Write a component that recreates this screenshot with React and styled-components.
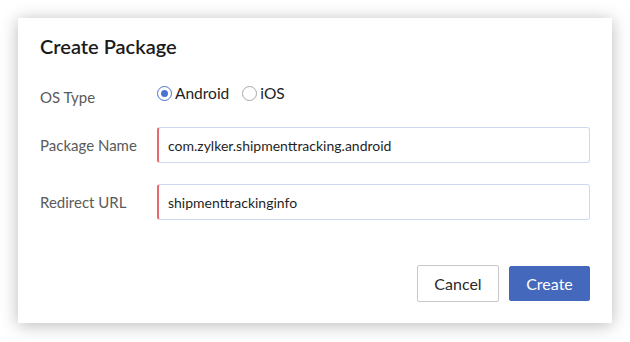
import React from "react";
import styled, { createGlobalStyle } from "styled-components";

const Global = createGlobalStyle`
  html, body { margin: 0; padding: 0; background: #ffffff; }
  body { font-family: Lato, "Open Sans", sans-serif; }
  * { box-sizing: border-box; }
`;

const Page = styled.div`
  padding: 18px;
  width: 630px;
  height: 342px;
`;

const Card = styled.div`
  width: 594px;
  height: 305px;
  background: #ffffff;
  box-shadow: 0 2px 16px rgba(0, 0, 0, 0.28);
  padding: 16px 22px 21px 22px;
  display: flex;
  flex-direction: column;
`;

const Title = styled.h2`
  margin: 0;
  font-size: 20px;
  line-height: 24px;
  font-weight: 600;
  color: #1b1b1b;
`;

const Row = styled.div`
  display: flex;
  align-items: flex-start;
  margin-top: ${(p) => p.$gap}px;
`;

const Label = styled.div`
  width: 117px;
  flex: none;
  font-size: 15px;
  line-height: 36px;
  color: #5a5a5a;
`;

const RadioGroup = styled.div`
  display: flex;
  align-items: center;
  gap: 13px;
  margin-top: 4px;
`;

const RadioItem = styled.label`
  display: flex;
  align-items: center;
  gap: 3px;
  font-size: 15.5px;
  line-height: 20px;
  color: #222;
`;

const RadioCircle = styled.span`
  width: 15px;
  height: 15px;
  border-radius: 50%;
  border: 1px solid ${(p) => (p.$checked ? "#4a72d4" : "#a8a8a8")};
  display: flex;
  align-items: center;
  justify-content: center;
  background: #fff;
  &::after {
    content: "";
    width: 7px;
    height: 7px;
    border-radius: 50%;
    background: ${(p) => (p.$checked ? "#4a72d4" : "transparent")};
  }
`;

const Input = styled.div`
  flex: 1;
  height: 36px;
  border: 1px solid #cfd8ee;
  border-left: 2px solid #e66a6c;
  border-radius: 3px;
  padding-left: 9px;
  display: flex;
  align-items: center;
  font-size: 14px;
  color: #1f1f1f;
`;

const Footer = styled.div`
  margin-top: auto;
  display: flex;
  justify-content: flex-end;
  align-items: center;
  gap: 10px;
`;

const Button = styled.button`
  font-family: Lato, "Open Sans", sans-serif;
  font-size: 16px;
  height: ${(p) => (p.$primary ? 35 : 37)}px;
  width: ${(p) => (p.$primary ? 81 : 82)}px;
  border-radius: 2px;
  border: 1px solid ${(p) => (p.$primary ? "#4468bb" : "#c8c8c8")};
  background: ${(p) => (p.$primary ? "#4468bb" : "#ffffff")};
  color: ${(p) => (p.$primary ? "#ffffff" : "#2a2a2a")};
  padding: 0;
  cursor: pointer;
`;

export default function App() {
  return (
    <>
      <Global />
      <Page>
        <Card>
          <Title>Create Package</Title>
          <Row $gap={21}>
            <Label>OS Type</Label>
            <RadioGroup>
              <RadioItem>
                <RadioCircle $checked />
                Android
              </RadioItem>
              <RadioItem>
                <RadioCircle />
                iOS
              </RadioItem>
            </RadioGroup>
          </Row>
          <Row $gap={12}>
            <Label>Package Name</Label>
            <Input>com.zylker.shipmenttracking.android</Input>
          </Row>
          <Row $gap={21}>
            <Label>Redirect URL</Label>
            <Input>shipmenttrackinginfo</Input>
          </Row>
          <Footer>
            <Button>Cancel</Button>
            <Button $primary>Create</Button>
          </Footer>
        </Card>
      </Page>
    </>
  );
}
